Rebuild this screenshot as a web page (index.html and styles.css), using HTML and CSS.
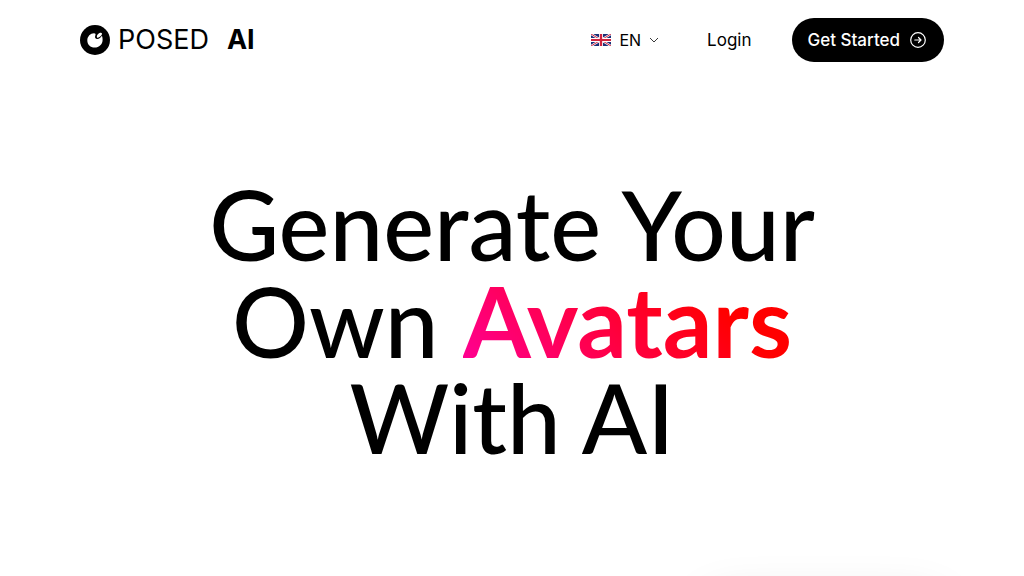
FILE: index.html
```html
<!DOCTYPE html>
<html lang="en">
<head>
  <meta charset="utf-8">
  <meta name="viewport" content="width=device-width, initial-scale=1">
  <title>Posed AI</title>
  <link rel="stylesheet" href="styles.css">
</head>
<body>
  <header class="header">
    <a class="brand" href="#" aria-label="Posed AI">
      <svg class="brand-mark" viewBox="0 0 30 30" aria-hidden="true">
        <circle cx="15" cy="15" r="15" fill="#000"/>
        <path d="M14 8.2C10.4 8.3 7.4 11.4 7.3 15.2C7.2 19.4 10.4 22.6 14.6 22.6C19.2 22.6 22.6 19.2 22.6 15C22.6 13 22.4 11.6 21.8 10.8C20.8 12.6 18.8 14.2 16.8 13.9C15.1 13.6 14.6 12 15.4 10.2C16 8.9 15.2 8.2 14 8.2Z" fill="#fff"/>
        <path d="M17 12.4C16.4 11.2 17.4 9 19.4 8.1C21.6 7.2 22.8 8.4 21.4 10.3C19.8 12.2 17.6 13.4 17 12.4Z" fill="#fff"/>
      </svg>
      <span class="brand-name"><span>POSED</span> <strong class="brand-strong">AI</strong></span>
    </a>
    <nav class="nav" aria-label="Main">
      <button class="language" type="button" aria-haspopup="listbox">
        <svg class="flag" viewBox="0 0 60 38" preserveAspectRatio="none" aria-hidden="true">
          <path d="M0 0H60V38H0Z" fill="#1c2f77"/>
          <path d="M0 0L60 38M60 0L0 38" stroke="#fff" stroke-width="7"/>
          <path d="M0 0L60 38M60 0L0 38" stroke="#d0223e" stroke-width="3"/>
          <path d="M30 0V38M0 19H60" stroke="#fff" stroke-width="12"/>
          <path d="M30 0V38M0 19H60" stroke="#d0223e" stroke-width="7"/>
        </svg>
        <span>EN</span>
        <svg class="chevron" viewBox="0 0 10 10" aria-hidden="true">
          <path d="M1 3L5 7L9 3" fill="none" stroke="#222" stroke-width="0.9"/>
        </svg>
      </button>
      <a class="login" href="#">Login</a>
      <a class="start" href="#">
        <span>Get Started</span>
        <svg class="arrow" viewBox="0 0 16 16" fill="none" stroke="#fff" stroke-width="1.2" stroke-linecap="round" stroke-linejoin="round" aria-hidden="true">
          <circle cx="8" cy="8" r="7.3"/>
          <path d="M4.8 8H11M8.5 5.5L11 8L8.5 10.5"/>
        </svg>
      </a>
    </nav>
  </header>
  <main class="hero">
    <h1 class="title">Generate Your Own <strong class="accent">Avatars</strong> With AI</h1>
    <div class="preview"></div>
  </main>
</body>
</html>
```
FILE: styles.css
```css
* {
  box-sizing: border-box;
}

body {
  margin: 0;
  overflow-x: hidden;
  background: #fff;
  color: #000;
  font-family: Inter, "Liberation Sans", sans-serif;
}

a {
  color: inherit;
  text-decoration: none;
}

.header {
  display: flex;
  align-items: center;
  justify-content: space-between;
  padding: 18px 80px;
}

.brand {
  display: flex;
  align-items: center;
  gap: 8px;
}

.brand-mark {
  width: 30px;
  height: 30px;
}

.brand-name {
  display: flex;
  gap: 18px;
  font-size: 27px;
  line-height: 32px;
}

.brand-strong {
  font-weight: 700;
}

.nav {
  display: flex;
  align-items: center;
  gap: 40px;
}

.language {
  display: flex;
  align-items: center;
  gap: 8px;
  padding: 8px;
  border: 0;
  background: none;
  color: inherit;
  font: inherit;
  font-size: 16px;
}

.flag {
  width: 20px;
  height: 12px;
}

.chevron {
  width: 10px;
  height: 10px;
}

.login,
.start {
  font-size: 17px;
  line-height: 24px;
}

.start {
  display: flex;
  align-items: center;
  gap: 10px;
  padding: 10px 18px 10px 16px;
  border-radius: 22px;
  background: #000;
  color: #fff;
  font-weight: 500;
}

.arrow {
  width: 16px;
  height: 16px;
}

.hero {
  height: calc(100vh - 80px);
  padding: 96px 80px 0;
  overflow: hidden;
}

.title {
  max-width: 700px;
  margin: 0 auto;
  font-family: Lato, sans-serif;
  font-size: 96px;
  font-weight: 500;
  line-height: 96px;
  text-align: center;
}

.accent {
  display: inline-block;
  background: linear-gradient(45deg, #ff0095, #ff0000 75%);
  background-clip: text;
  -webkit-background-clip: text;
  color: transparent;
  font-size: 98px;
  font-weight: 700;
}

.preview {
  width: 240px;
  height: 240px;
  margin: 136px 0 0 auto;
  border-radius: 24px;
  box-shadow: 0 0 48px rgb(0 0 0 / 15%);
}
```
